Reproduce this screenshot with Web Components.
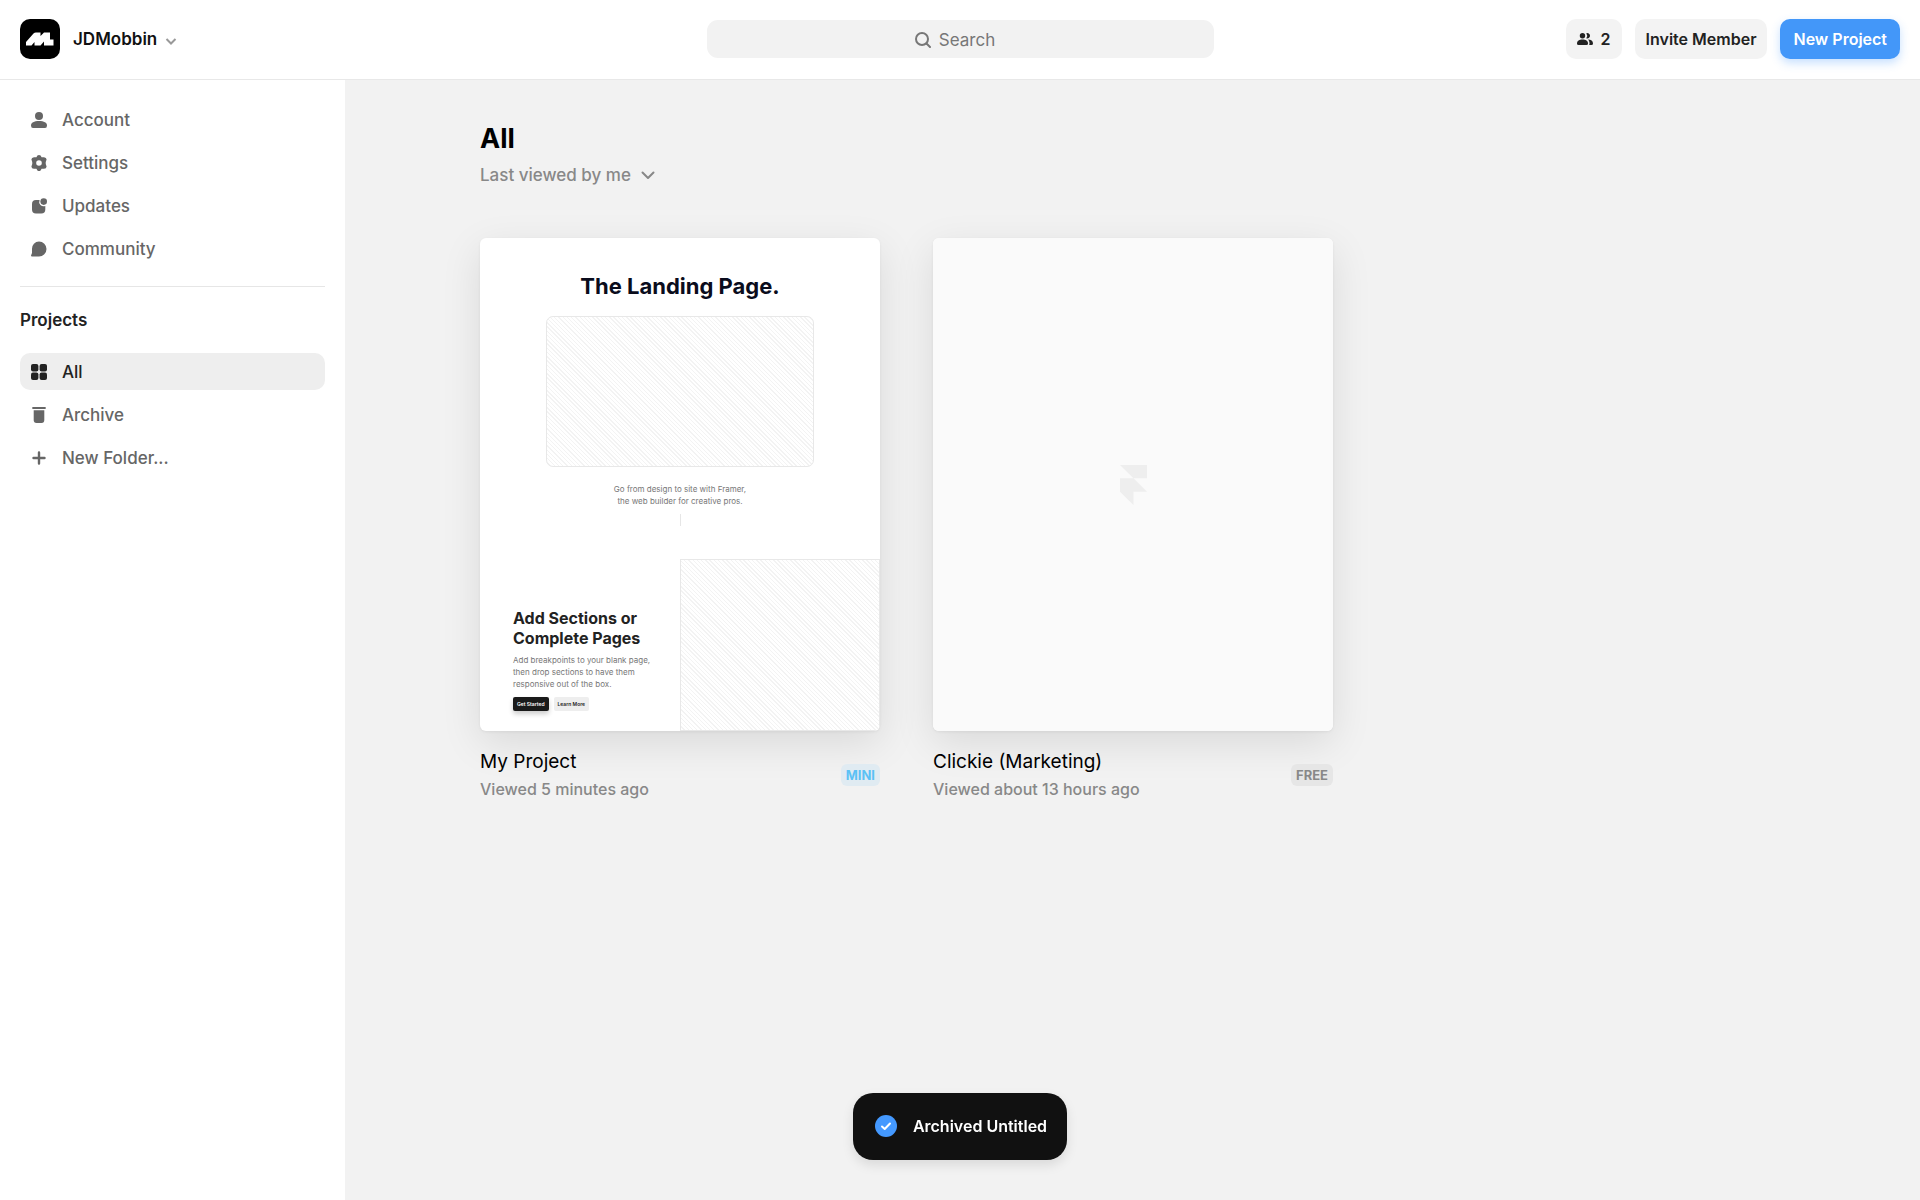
<!DOCTYPE html>
<html lang="en">
<head>
<meta charset="utf-8">
<meta name="viewport" content="width=device-width, initial-scale=1">
<title>JDMobbin – Projects</title>
<style>
  body {
    margin: 0;
    font-family: Inter, "Liberation Sans", sans-serif;
    font-size: 17px;
    color: #222;
    background: #f2f2f2;
  }
</style>
</head>
<body>
<app-shell>
  <app-header slot="header" workspace="JDMobbin" members="2"></app-header>

  <side-nav slot="sidebar">
    <nav-item icon="user">Account</nav-item>
    <nav-item icon="gear">Settings</nav-item>
    <nav-item icon="updates">Updates</nav-item>
    <nav-item icon="chat">Community</nav-item>
    <nav-item slot="projects" icon="grid" active>All</nav-item>
    <nav-item slot="projects" icon="trash">Archive</nav-item>
    <nav-item slot="projects" icon="plus">New Folder...</nav-item>
  </side-nav>

  <project-list heading="All">
    <project-card name="My Project" viewed="Viewed 5 minutes ago" plan="MINI">
      <landing-preview></landing-preview>
    </project-card>
    <project-card name="Clickie (Marketing)" viewed="Viewed about 13 hours ago" plan="FREE">
      <empty-preview></empty-preview>
    </project-card>
  </project-list>

  <toast-message slot="toast">Archived Untitled</toast-message>
</app-shell>

<script>
const ICONS = {
  logo: ['0 0 28 14', '<path fill="currentColor" d="M0 13.500V10L7.500 1.500Q8.500.5 10 .5H14.500V4L18 .5H24V7.500H27.500V13.500H18V9.500L14.500 13.500H8.500V10L5.500 13.500Z"/>'],
  chevron: ['0 0 12 12', '<path fill="none" stroke="currentColor" stroke-width="2" d="M1.500 4l4.500 4.500L10.500 4"/>'],
  chevronWide: ['0 0 14 14', '<path fill="none" stroke="currentColor" stroke-width="2" stroke-linecap="round" stroke-linejoin="round" d="M1.500 4.500L7 10l5.500-5.500"/>'],
  search: ['0 0 16 16', '<g fill="none" stroke="currentColor" stroke-width="2" stroke-linecap="round"><circle cx="7" cy="7" r="6"/><path d="M11.500 11.500L15 15"/></g>'],
  members: ['0 0 16 16', '<g fill="currentColor"><circle cx="5.500" cy="4.700" r="2.700"/><path d="M0 12.500C0 10 2.300 8.600 5.500 8.600S11 10 11 12.500Q11 14 9.500 14H1.500Q0 14 0 12.500Z"/><path d="M9.300 2.200A2.700 2.700 0 1 1 9.300 7.200A4.200 4.200 0 0 0 9.300 2.200Z"/><path d="M11 8.600C14 8.600 16 10 16 12.500Q16 14 14.500 14H12Q12.500 13.500 12.500 12.500C12.500 10.800 12 9.600 11 8.600Z"/></g>'],
  user: ['0 0 16 16', '<g fill="currentColor"><circle cx="8" cy="4" r="4"/><path d="M0 13.500C0 10.500 3 9 8 9s8 1.500 8 4.500Q16 16 14 16H2Q0 16 0 13.500Z"/></g>'],
  gear: ['0 0 16 16', '<path fill="currentColor" fill-rule="evenodd" d="M6.400.6Q8-.6 9.600.6L10.600 2.300 13 2.200Q15.500 2.400 15.600 4.600L14.900 6.600Q14.500 8 14.900 9.400L15.600 11.400Q15.500 13.600 13 13.800L10.600 13.700 9.600 15.400Q8 16.600 6.400 15.400L5.400 13.700 3 13.800Q.5 13.600.4 11.400L1.100 9.400Q1.500 8 1.100 6.600L.4 4.600Q.5 2.400 3 2.200L5.400 2.300ZM8 5.200a2.800 2.800 0 1 0 0 5.600a2.800 2.800 0 0 0 0-5.600Z"/>'],
  updates: ['0 0 16 16', '<g fill="currentColor"><circle cx="12.700" cy="3.600" r="3.300"/><path d="M5 2H8.600A4.500 4.500 0 0 0 14.300 8V11.500Q14.300 15.500 10.300 15.500H5Q1 15.500 1 11.500V6Q1 2 5 2Z"/></g>'],
  chat: ['0 0 16 16', '<path fill="currentColor" d="M8 .5A7.500 7.500 0 1 1 8 15.500H1Q0 15.500 0 14.500L1 12V8A7.200 7.200 0 0 1 8 .5Z"/>'],
  grid: ['0 0 16 16', '<g fill="currentColor"><rect width="7.400" height="7.400" rx="2"/><rect x="8.600" width="7.400" height="7.400" rx="2"/><rect y="8.600" width="7.400" height="7.400" rx="2"/><rect x="8.600" y="8.600" width="7.400" height="7.400" rx="2"/></g>'],
  trash: ['0 0 16 16', '<g fill="currentColor"><rect x="1.300" y="0" width="13.400" height="2" rx=".6"/><path d="M2.700 3.200H13.300V13Q13.300 16 10.500 16H5.500Q2.700 16 2.700 13Z"/></g>'],
  plus: ['0 0 16 16', '<path fill="none" stroke="currentColor" stroke-width="2.400" stroke-linecap="round" d="M8 2.500v11M2.500 8h11"/>'],
  check: ['0 0 22 22', '<circle cx="11" cy="11" r="11" fill="#4499ff"/><path fill="none" stroke="#fff" stroke-width="2" stroke-linecap="round" stroke-linejoin="round" d="M7 11.500l2.700 2.500L15 8.500"/>'],
  framer: ['0 0 27 40', '<path fill="currentColor" d="M0 0H27V13.300H13.500ZM0 13.300H13.500L27 26.700H13.500V40L0 26.700Z"/>']
};

function svg(name, width, height = width) {
  const [viewBox, body] = ICONS[name];
  return `<svg width="${width}" height="${height}" viewBox="${viewBox}" aria-hidden="true">${body}</svg>`;
}

class AppShell extends HTMLElement {
  constructor() {
    super();
    this.attachShadow({ mode: "open" });
  }

  connectedCallback() {
    this.shadowRoot.innerHTML = `
      <style>
        :host {
          display: flex;
          flex-direction: column;
          min-height: 100vh;
        }

        .body {
          display: flex;
          flex: 1;
        }

        main {
          flex: 1;
          min-width: 0;
        }

        .toast-layer {
          position: fixed;
          left: 0;
          right: 0;
          bottom: 40px;
          display: flex;
          justify-content: center;
          pointer-events: none;
        }
      </style>
      <slot name="header"></slot>
      <div class="body">
        <slot name="sidebar"></slot>
        <main><slot></slot></main>
      </div>
      <div class="toast-layer"><slot name="toast"></slot></div>
    `;
  }
}

class AppHeader extends HTMLElement {
  constructor() {
    super();
    this.attachShadow({ mode: "open" });
  }

  connectedCallback() {
    this.shadowRoot.innerHTML = `
      <style>
        :host {
          display: block;
        }

        header {
          display: grid;
          grid-template-columns: 1fr minmax(160px, 507px) 1fr;
          align-items: center;
          gap: 20px;
          padding: 19px 20px 20px;
          background: #fff;
          border-bottom: 1px solid #e8e8e8;
        }

        button {
          display: inline-flex;
          align-items: center;
          border: 0;
          font: inherit;
          font-weight: 600;
          color: inherit;
          cursor: pointer;
          white-space: nowrap;
        }

        .workspace {
          justify-self: start;
          padding: 0;
          background: none;
          color: #111;
        }

        .logo {
          display: grid;
          place-items: center;
          width: 40px;
          height: 40px;
          margin-right: 13px;
          border-radius: 10px;
          background: #000;
          color: #fff;
        }

        .workspace > svg {
          margin: 4px 0 0 8px;
          color: #999;
        }

        .search {
          display: flex;
          align-items: center;
          justify-content: center;
          gap: 8px;
          box-sizing: border-box;
          height: 38px;
          padding: 1px 10px 0 0;
          border-radius: 11px;
          background: #f2f2f2;
          color: #777;
          cursor: text;
        }

        input {
          field-sizing: content;
          max-width: 80%;
          padding: 0;
          border: 0;
          outline: 0;
          background: none;
          font: inherit;
          color: #222;
        }

        input::placeholder {
          color: #777;
          opacity: 1;
        }

        .actions {
          display: flex;
          justify-content: flex-end;
          gap: 13px;
        }

        .actions button {
          gap: 8px;
          height: 40px;
          padding: 0 11px;
          border-radius: 10px;
          background: #f3f3f3;
          font-size: 16px;
        }

        .actions .primary {
          padding: 0 13px;
          background: #4397f9;
          color: #fff;
          box-shadow: 0 4px 10px rgba(68, 153, 255, 0.3);
        }
      </style>
      <header>
        <button class="workspace" type="button" aria-haspopup="menu">
          <span class="logo">${svg("logo", 28, 14)}</span>
          ${this.getAttribute("workspace")}
          ${svg("chevron", 12)}
        </button>
        <label class="search">
          ${svg("search", 16)}
          <input type="text" placeholder="Search" aria-label="Search">
        </label>
        <div class="actions">
          <button type="button" aria-label="${this.getAttribute("members")} members">${svg("members", 16)}${this.getAttribute("members")}</button>
          <button type="button">Invite Member</button>
          <button class="primary" type="button">New Project</button>
        </div>
      </header>
    `;
  }
}

class SideNav extends HTMLElement {
  constructor() {
    super();
    this.attachShadow({ mode: "open" });
  }

  connectedCallback() {
    this.shadowRoot.innerHTML = `
      <style>
        :host {
          display: block;
          flex: 0 0 345px;
          box-sizing: border-box;
          padding: 21px 20px;
          background: #fff;
        }

        nav {
          display: flex;
          flex-direction: column;
          gap: 6px;
        }

        hr {
          margin: 19px 0 22px;
          border: 0;
          border-top: 1px solid #e6e6e6;
        }

        h2 {
          margin: 0 0 22px;
          font-size: 17px;
          line-height: 22px;
          font-weight: 600;
        }
      </style>
      <nav aria-label="Workspace"><slot></slot></nav>
      <hr>
      <h2>Projects</h2>
      <nav aria-label="Projects"><slot name="projects"></slot></nav>
    `;
  }
}

class NavItem extends HTMLElement {
  constructor() {
    super();
    this.attachShadow({ mode: "open" });
  }

  connectedCallback() {
    this.shadowRoot.innerHTML = `
      <style>
        :host {
          display: block;
        }

        a {
          display: flex;
          align-items: center;
          gap: 15px;
          height: 37px;
          padding: 0 11px;
          border-radius: 10px;
          color: #666;
          font-weight: 500;
          text-decoration: none;
        }

        :host([active]) a {
          background: #eee;
          color: #222;
        }
      </style>
      <a href="#" ${this.hasAttribute("active") ? 'aria-current="page"' : ""}>
        ${svg(this.getAttribute("icon"), 16)}
        <slot></slot>
      </a>
    `;
  }
}

class ProjectList extends HTMLElement {
  constructor() {
    super();
    this.attachShadow({ mode: "open" });
  }

  connectedCallback() {
    this.shadowRoot.innerHTML = `
      <style>
        :host {
          display: block;
          padding: 42px 135px;
        }

        h1 {
          margin: 0;
          font-size: 27px;
          line-height: 34px;
          font-weight: 700;
          color: #000;
        }

        .sort {
          display: inline-flex;
          align-items: center;
          gap: 10px;
          margin: 8px 0 52px;
          color: #888;
        }

        select {
          appearance: none;
          field-sizing: content;
          height: 22px;
          padding: 0;
          border: 0;
          background: none;
          font: inherit;
          font-weight: 500;
          color: #888;
        }

        .cards {
          display: grid;
          grid-template-columns: repeat(auto-fill, 400px);
          gap: 53px;
        }
      </style>
      <h1>${this.getAttribute("heading")}</h1>
      <label class="sort">
        <select aria-label="Sort projects">
          <option>Last viewed by me</option>
        </select>
        ${svg("chevronWide", 14)}
      </label>
      <div class="cards"><slot></slot></div>
    `;
  }
}

class ProjectCard extends HTMLElement {
  constructor() {
    super();
    this.attachShadow({ mode: "open" });
  }

  connectedCallback() {
    const plan = this.getAttribute("plan");
    this.shadowRoot.innerHTML = `
      <style>
        :host {
          display: block;
        }

        .thumb {
          display: grid;
          aspect-ratio: 400 / 493;
          overflow: hidden;
          border-radius: 6px;
          background: #fff;
          box-shadow: 0 1px 3px rgba(0, 0, 0, 0.06), 0 12px 40px rgba(0, 0, 0, 0.1);
        }

        .info {
          display: flex;
          align-items: center;
          justify-content: space-between;
          margin-top: 19px;
        }

        h3, p {
          margin: 0;
          font-weight: 500;
        }

        h3 {
          font-size: 19px;
          line-height: 24px;
          font-weight: 400;
          color: #000;
        }

        p {
          margin-top: 4px;
          font-size: 16px;
          line-height: 22px;
          color: #888;
        }

        .plan {
          padding: 0 5px;
          border-radius: 6px;
          background: #e6e6e6;
          color: #888;
          font-size: 13px;
          line-height: 22px;
          font-weight: 700;
        }

        .plan.mini {
          background: #e0ebf2;
          color: #5bc1f5;
        }
      </style>
      <div class="thumb"><slot></slot></div>
      <div class="info">
        <div>
          <h3>${this.getAttribute("name")}</h3>
          <p>${this.getAttribute("viewed")}</p>
        </div>
        <span class="plan ${plan.toLowerCase()}">${plan}</span>
      </div>
    `;
  }
}

class LandingPreview extends HTMLElement {
  constructor() {
    super();
    this.attachShadow({ mode: "open" });
  }

  connectedCallback() {
    this.shadowRoot.innerHTML = `
      <style>
        :host {
          display: flex;
          flex-direction: column;
          font-size: 8px;
          line-height: 12px;
          color: #777;
        }

        .hatch {
          border: 1px solid #e8e8e8;
          background: repeating-linear-gradient(45deg, #fff 0 2px, #f3f3f3 2px 3px);
        }

        .hero {
          display: flex;
          flex-direction: column;
          align-items: center;
          text-align: center;
          padding-top: 33px;
        }

        h4, h5, p {
          margin: 0;
        }

        h4 {
          font-size: 22px;
          line-height: 30px;
          color: #0a0c1c;
        }

        .hero .hatch {
          box-sizing: border-box;
          width: 67%;
          height: 151px;
          margin: 15px 0 16px;
          border-radius: 7px;
        }

        .rule {
          width: 1px;
          height: 12px;
          margin: 7px 0 33px;
          background: #e6e6e6;
        }

        .split {
          display: grid;
          grid-template-columns: 1fr 1fr;
          flex: 1;
        }

        .copy {
          display: flex;
          flex-direction: column;
          justify-content: flex-end;
          padding: 0 0 20px 33px;
        }

        h5 {
          margin-bottom: 6px;
          font-size: 16px;
          line-height: 20px;
          color: #222;
        }

        .buttons {
          display: flex;
          gap: 5px;
          margin-top: 7px;
        }

        button {
          height: 14px;
          padding: 0 4px;
          border: 0;
          border-radius: 2px;
          background: #eee;
          color: #222;
          font: inherit;
          font-size: 5px;
          font-weight: 600;
        }

        .dark {
          background: #1a1a1a;
          color: #fff;
          box-shadow: 0 3px 5px rgba(0, 0, 0, 0.2);
        }
      </style>
      <section class="hero">
        <h4>The Landing Page.</h4>
        <div class="hatch"></div>
        <p>Go from design to site with Framer,<br>the web builder for creative pros.</p>
        <div class="rule"></div>
      </section>
      <section class="split">
        <div class="copy">
          <h5>Add Sections or<br>Complete Pages</h5>
          <p>Add breakpoints to your blank page,<br>then drop sections to have them<br>responsive out of the box.</p>
          <div class="buttons">
            <button class="dark" type="button">Get Started</button>
            <button type="button">Learn More</button>
          </div>
        </div>
        <div class="hatch"></div>
      </section>
    `;
  }
}

class EmptyPreview extends HTMLElement {
  constructor() {
    super();
    this.attachShadow({ mode: "open" });
  }

  connectedCallback() {
    this.shadowRoot.innerHTML = `
      <style>
        :host {
          display: grid;
          place-items: center;
          background: #fafafa;
          color: #eee;
        }
      </style>
      ${svg("framer", 27, 40)}
    `;
  }
}

class ToastMessage extends HTMLElement {
  constructor() {
    super();
    this.attachShadow({ mode: "open" });
  }

  connectedCallback() {
    this.shadowRoot.innerHTML = `
      <style>
        :host {
          display: block;
          pointer-events: auto;
        }

        div {
          display: flex;
          align-items: center;
          gap: 16px;
          padding: 22px 20px 23px 22px;
          border-radius: 20px;
          background: #111;
          box-shadow: 0 5px 12px rgba(0, 0, 0, 0.1);
          color: #fff;
          font-size: 16px;
          line-height: 22px;
          font-weight: 600;
        }
      </style>
      <div role="status">
        ${svg("check", 22)}
        <slot></slot>
      </div>
    `;
  }
}

customElements.define("app-shell", AppShell);
customElements.define("app-header", AppHeader);
customElements.define("side-nav", SideNav);
customElements.define("nav-item", NavItem);
customElements.define("project-list", ProjectList);
customElements.define("project-card", ProjectCard);
customElements.define("landing-preview", LandingPreview);
customElements.define("empty-preview", EmptyPreview);
customElements.define("toast-message", ToastMessage);
</script>
</body>
</html>
